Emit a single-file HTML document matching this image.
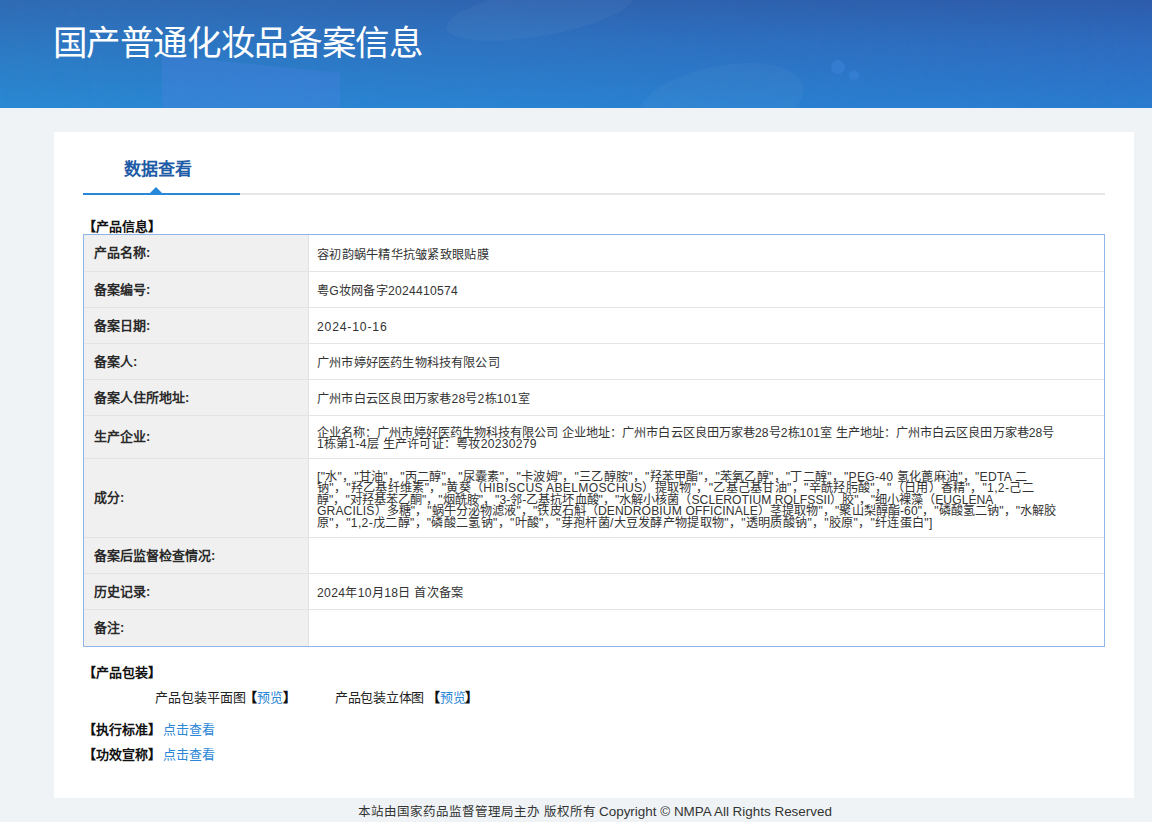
<!DOCTYPE html>
<html lang="zh-CN">
<head>
<meta charset="utf-8">
<title>国产普通化妆品备案信息</title>
<style>
html,body{margin:0;padding:0;}
body{width:1152px;height:822px;overflow:hidden;position:relative;background:#eff3f6;font-family:"Liberation Sans",sans-serif;color:#333;}
.abs{position:absolute;white-space:nowrap;}
#hdr{position:absolute;left:0;top:0;width:1152px;height:108px;overflow:hidden;
 background:linear-gradient(180deg,#2d62ad 0%,#2a83d0 100%);}
#hdr .title{position:absolute;left:52.5px;top:21px;font-size:34.5px;letter-spacing:-0.35px;line-height:44px;color:#fff;}
#card{position:absolute;left:54px;top:132px;width:1080px;height:666px;background:#fff;}
.tab{position:absolute;left:124px;top:158px;font-size:17px;line-height:24px;font-weight:bold;color:#1e5ba6;}
.tabline{position:absolute;left:83px;top:193px;width:1022px;height:2px;background:#e6e6e6;}
.tabblue{position:absolute;left:83px;top:193px;width:157px;height:2px;background:#2787d8;}
.tri{position:absolute;left:150px;top:187px;width:0;height:0;border-left:6px solid transparent;border-right:6px solid transparent;border-bottom:6px solid #2787d8;}
.sec{position:absolute;font-size:13px;line-height:16px;font-weight:bold;color:#111;}
#tbl{position:absolute;left:83px;top:234px;width:1020px;height:411px;border:1px solid #8fb4e6;background:#fff;}
#tbl .lab{position:absolute;left:0;width:224px;background:#f0f0f0;}
.row{position:absolute;left:0;width:1020px;}
.row .l{position:absolute;left:0;top:0;width:225px;height:100%;background:#f0f0f0;border-right:1px solid #e2e2e2;box-sizing:border-box;}
.row .l span{position:absolute;left:10px;margin-top:0px;font-size:13px;font-weight:bold;color:#2a2a2a;}
.row .v{position:absolute;white-space:nowrap;left:233px;font-size:12.15px;margin-top:2.5px;color:#333;}
.sep{position:absolute;left:0;width:1020px;height:1px;background:#e4e4e4;}
.link{color:#2b86d6;}
.foot{position:absolute;left:1px;width:1188px;top:801px;text-align:center;font-size:12.5px;line-height:22px;color:#333;}
</style>
</head>
<body>
<div id="hdr">
  <svg width="1152" height="108" style="position:absolute;left:0;top:0">
    <defs>
      <linearGradient id="gl" x1="0" y1="0" x2="0" y2="1">
        <stop offset="0" stop-color="#306bb5"/>
        <stop offset="0.4" stop-color="#2d78c2"/>
        <stop offset="1" stop-color="#2a89d3"/>
      </linearGradient>
      <linearGradient id="gr" x1="0" y1="0" x2="0" y2="1">
        <stop offset="0" stop-color="#2d5caa"/>
        <stop offset="0.4" stop-color="#2e6bbf"/>
        <stop offset="1" stop-color="#2a7bcf"/>
      </linearGradient>
      <linearGradient id="gm" x1="0" y1="0" x2="1" y2="0">
        <stop offset="0" stop-color="#fff" stop-opacity="0"/>
        <stop offset="1" stop-color="#fff" stop-opacity="1"/>
      </linearGradient>
      <mask id="mk" maskUnits="userSpaceOnUse" x="0" y="0" width="1152" height="108">
        <rect width="1152" height="108" fill="url(#gm)"/>
      </mask>
    </defs>
    <rect width="1152" height="108" fill="url(#gl)"/>
    <rect width="1152" height="108" fill="url(#gr)" mask="url(#mk)"/>
    <polygon points="162,55 340,73 340,108 162,108" fill="#4a80e0" fill-opacity="0.35"/>
    <ellipse cx="540" cy="12" rx="95" ry="24" transform="rotate(-10 540 12)" fill="#ffffff" fill-opacity="0.035"/>
    <ellipse cx="720" cy="104" rx="85" ry="38" transform="rotate(-12 720 104)" fill="#ffffff" fill-opacity="0.03"/>
    <circle cx="838" cy="67" r="7" fill="#4a90e8" fill-opacity="0.3"/>
    <circle cx="854" cy="75" r="5" fill="#4a90e8" fill-opacity="0.3"/>
  </svg>
  <div class="title">国产普通化妆品备案信息</div>
</div>
<div id="card"></div>
<div class="tab">数据查看</div>
<div class="tabline"></div>
<div class="tabblue"></div>
<div class="tri"></div>
<div class="sec" style="left:82.5px;top:219px;">【产品信息】</div>
<div id="tbl">
<div class="row" style="top:0px;height:36px;"><div class="l"><span style="top:0px;line-height:36px;">产品名称:</span></div><div class="v" style="top:-1px;line-height:36px;"><span style="letter-spacing:0.27px">容初韵蜗牛精华抗皱紧致眼贴膜</span></div></div>
<div class="sep" style="top:36px;"></div>
<div class="row" style="top:37px;height:35px;"><div class="l"><span style="top:0px;line-height:35px;">备案编号:</span></div><div class="v" style="top:-1px;line-height:35px;"><span style="letter-spacing:0.25px">粤G妆网备字2024410574</span></div></div>
<div class="sep" style="top:72px;"></div>
<div class="row" style="top:73px;height:35px;"><div class="l"><span style="top:0px;line-height:35px;">备案日期:</span></div><div class="v" style="top:-1px;line-height:35px;"><span style="letter-spacing:0.84px">2024-10-16</span></div></div>
<div class="sep" style="top:108px;"></div>
<div class="row" style="top:109px;height:35px;"><div class="l"><span style="top:0px;line-height:35px;">备案人:</span></div><div class="v" style="top:-1px;line-height:35px;"><span style="letter-spacing:0.19px">广州市婷好医药生物科技有限公司</span></div></div>
<div class="sep" style="top:144px;"></div>
<div class="row" style="top:145px;height:35px;"><div class="l"><span style="top:0px;line-height:35px;">备案人住所地址:</span></div><div class="v" style="top:-1px;line-height:35px;"><span style="letter-spacing:0.22px">广州市白云区良田万家巷28号2栋101室</span></div></div>
<div class="sep" style="top:180px;"></div>
<div class="row" style="top:181px;height:42px;"><div class="l"><span style="top:0px;line-height:42px;">生产企业:</span></div><div class="v" style="top:9.4px;line-height:11.6px;"><span style="letter-spacing:0.071px">企业名称：广州市婷好医药生物科技有限公司 企业地址：广州市白云区良田万家巷28号2栋101室 生产地址：广州市白云区良田万家巷28号</span><br><span style="letter-spacing:0.252px">1栋第1-4层 生产许可证：粤妆20230279</span></div></div>
<div class="sep" style="top:223px;"></div>
<div class="row" style="top:224px;height:78px;"><div class="l"><span style="top:0px;line-height:78px;">成分:</span></div><div class="v" style="top:10.0px;line-height:11.6px;"><span style="letter-spacing:0.255px">["水"，"甘油"，"丙二醇"，"尿囊素"，"卡波姆"，"三乙醇胺"，"羟苯甲酯"，"苯氧乙醇"，"丁二醇"，"PEG-40 氢化蓖麻油"，"EDTA 二</span><br><span style="letter-spacing:0.308px">钠"，"羟乙基纤维素"，"黄葵（HIBISCUS ABELMOSCHUS）提取物"，"乙基己基甘油"，"辛酰羟肟酸"，"（日用）香精"，"1,2-己二</span><br><span style="letter-spacing:0.03px">醇"，"对羟基苯乙酮"，"烟酰胺"，"3-邻-乙基抗坏血酸"，"水解小核菌（SCLEROTIUM ROLFSSII）胶"，"细小裸藻（EUGLENA</span><br><span style="letter-spacing:0.104px">GRACILIS）多糖"，"蜗牛分泌物滤液"，"铁皮石斛（DENDROBIUM OFFICINALE）茎提取物"，"聚山梨醇酯-60"，"磷酸氢二钠"，"水解胶</span><br><span style="letter-spacing:0.306px">原"，"1,2-戊二醇"，"磷酸二氢钠"，"叶酸"，"芽孢杆菌/大豆发酵产物提取物"，"透明质酸钠"，"胶原"，"纤连蛋白"]</span></div></div>
<div class="sep" style="top:302px;"></div>
<div class="row" style="top:303px;height:35px;"><div class="l"><span style="top:0px;line-height:35px;">备案后监督检查情况:</span></div></div>
<div class="sep" style="top:338px;"></div>
<div class="row" style="top:339px;height:35px;"><div class="l"><span style="top:0px;line-height:35px;">历史记录:</span></div><div class="v" style="top:-1px;line-height:35px;"><span style="letter-spacing:0.34px">2024年10月18日 首次备案</span></div></div>
<div class="sep" style="top:374px;"></div>
<div class="row" style="top:375px;height:36px;"><div class="l"><span style="top:0px;line-height:36px;">备注:</span></div></div>
</div>
<div class="sec" style="left:82.5px;top:665px;">【产品包装】</div>
<div class="abs" style="left:155px;top:690px;font-size:13px;line-height:16px;color:#222;">产品包装平面图<b style="color:#111;margin-left:-2.5px">【</b><span class="link">预览</span><b style="color:#111">】</b></div>
<div class="abs" style="left:335px;top:690px;font-size:13px;line-height:16px;color:#222;"><span style="letter-spacing:-0.3px">产品包装立体图</span> <b style="color:#111;margin-left:-1px">【</b><span class="link">预览</span><b style="color:#111;margin-left:-1px">】</b></div>
<div class="sec" style="left:82.5px;top:722px;">【执行标准】</div>
<div class="abs link" style="left:163px;top:722px;font-size:13px;line-height:16px;">点击查看</div>
<div class="sec" style="left:82.5px;top:747px;">【功效宣称】</div>
<div class="abs link" style="left:163px;top:747px;font-size:13px;line-height:16px;">点击查看</div>
<div class="foot">本站由国家药品监督管理局主办 版权所有 <span style="font-size:13.45px">Copyright © NMPA All Rights Reserved</span></div>
</body>
</html>
